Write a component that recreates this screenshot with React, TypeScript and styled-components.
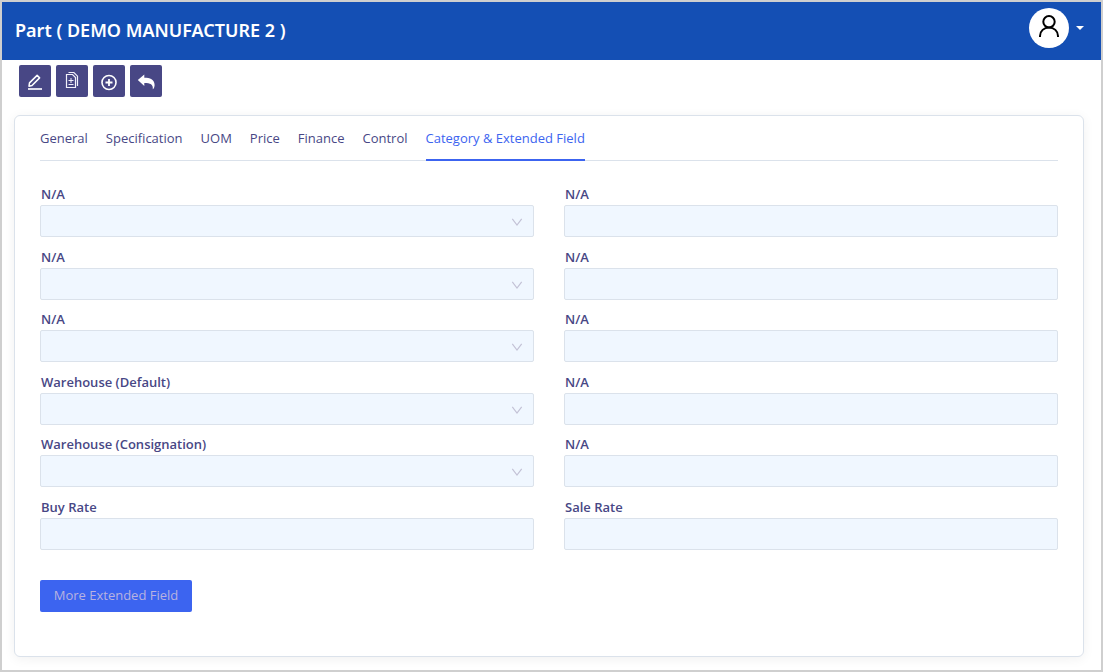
import React, { useId, useState } from "react";
import styled, { createGlobalStyle } from "styled-components";

const GlobalStyle = createGlobalStyle`
  *, *::before, *::after { box-sizing: border-box; }
  body {
    margin: 0;
    background: #ffffff;
    color: #484785;
    font-family: "Open Sans", "Noto Sans", sans-serif;
    font-size: 13px;
    line-height: 20px;
  }
  button, input, select { font: inherit; color: inherit; }
`;

const Page = styled.div`
  min-height: 100vh;
  border: 2px solid #cfcfcf;
  display: flex;
  flex-direction: column;
`;

const Header = styled.header`
  display: flex;
  align-items: center;
  justify-content: space-between;
  min-height: 58px;
  padding: 0 17px 6px 13px;
  background: #144fb4;
`;

const Title = styled.h1`
  margin: 0;
  padding-top: 4px;
  color: #ffffff;
  font-family: "Noto Sans", sans-serif;
  font-size: 18px;
  line-height: 28px;
  font-weight: 600;
`;

const UserMenu = styled.button`
  display: flex;
  align-items: center;
  gap: 7px;
  padding: 0;
  border: 0;
  background: none;
  cursor: pointer;
`;

const Avatar = styled.span`
  display: grid;
  place-items: center;
  width: 40px;
  height: 40px;
  border-radius: 50%;
  background: #ffffff;
`;

const Toolbar = styled.div`
  display: flex;
  gap: 5px;
  padding: 5px 17px;
`;

const ToolButton = styled.button`
  width: 32px;
  height: 32px;
  padding: 0;
  border: 0;
  border-radius: 2px;
  background: #484785;
  cursor: pointer;
  svg { display: block; }
`;

const Card = styled.main`
  flex: 1;
  margin: 13px 17px 13px 12px;
  padding: 0 25px 44px;
  border: 1px solid #dbe2eb;
  border-radius: 6px;
  background: #ffffff;
  box-shadow: 0 2px 12px rgba(0, 0, 0, 0.06);
`;

const TabList = styled.div`
  display: flex;
  gap: 18px;
  border-bottom: 1px solid #dbe2eb;
`;

const Tab = styled.button<{ $active: boolean }>`
  height: 45px;
  margin-bottom: -1px;
  padding: 1px 0 0;
  border: 0;
  border-bottom: 2px solid ${(p) => (p.$active ? "#3c64f0" : "transparent")};
  background: none;
  color: ${(p) => (p.$active ? "#3c64f0" : "#484785")};
  white-space: nowrap;
  cursor: pointer;
`;

const Form = styled.form`
  padding-top: 24px;
`;

const FieldGrid = styled.div`
  display: grid;
  grid-template-columns: 1fr 1fr;
  grid-auto-rows: 63px 62px;
  column-gap: 30px;
`;

const Field = styled.div`
  display: flex;
  flex-direction: column;
`;

const Label = styled.label`
  padding: 0 0 2px 1px;
  line-height: 18px;
  font-weight: 600;
`;

const Input = styled.input`
  width: 100%;
  height: 32px;
  padding: 0 11px;
  border: 1px solid #dbe2eb;
  border-radius: 2px;
  background: #f0f7ff;
`;

const SelectBox = styled.div`
  display: grid;
  align-items: center;
  > * { grid-area: 1 / 1; }
  > svg { justify-self: end; margin: 2px 11px 0 0; pointer-events: none; }
`;

const Select = styled(Input).attrs({ as: "select" })`
  appearance: none;
`;

const MoreButton = styled.button`
  min-width: 152px;
  height: 32px;
  margin-top: 20px;
  padding: 0 12px 2px;
  border: 0;
  border-radius: 2px;
  background: #3c64f0;
  color: #b8b2e0;
  cursor: pointer;
`;

const UserIcon = () => (
  <svg width="22" height="26" viewBox="0 0 22 26" fill="none" stroke="#000" strokeWidth="2" aria-hidden="true">
    <circle cx="11" cy="6.7" r="5.7" />
    <path d="M2 22v-1c0-5 4-8.5 9-8.5s9 3.500 9 8.500v1" />
  </svg>
);

const CaretIcon = () => (
  <svg width="8" height="4" viewBox="0 0 8 4" fill="#fff" aria-hidden="true">
    <path d="M0 0h8L4 4z" />
  </svg>
);

const EditIcon = () => (
  <svg width="32" height="32" viewBox="0 0 32 32" fill="none" stroke="#fff" strokeWidth="1.5" aria-hidden="true">
    <path d="M10 21.2l.5-3.3 7.6-7.5 2.5 2.5-7.6 7.6z" strokeLinejoin="round" />
    <path d="M9 24h14" stroke="#dcdbea" strokeWidth="2" />
  </svg>
);

const CopyIcon = () => (
  <svg width="32" height="32" viewBox="0 0 32 32" fill="none" stroke="#f2f1fa" strokeWidth="1" aria-hidden="true">
    <path d="M10.5 9.5h6l3 3v10h-9z" strokeWidth="1.2" />
    <path d="M12.5 7.5h5.4l3.6 3.7V21" strokeWidth="1.2" />
    <path d="M15 13v5M12.5 15.5h5M12.5 19.5h5" />
  </svg>
);

const AddIcon = () => (
  <svg width="32" height="32" viewBox="0 0 32 32" fill="none" stroke="#fff" aria-hidden="true">
    <circle cx="16" cy="17.5" r="7" strokeWidth="1.6" />
    <path d="M16 14v7M12.5 17.5h7" strokeWidth="1.8" />
  </svg>
);

const BackIcon = () => (
  <svg width="32" height="32" viewBox="0 0 32 32" fill="#fff" aria-hidden="true">
    <path d="M7.8 15.1l6.5-5.5v3.1c5.7 0 10.2 1.5 10.3 7.3 0 1.5-.5 3-1.4 4.1-.2.2-.5.1-.4-.2.5-4.5-2.3-5.900-8.500-6v3z" />
  </svg>
);

const ChevronIcon = () => (
  <svg width="12" height="8" viewBox="0 0 12 8" fill="none" stroke="#c3c2d6" strokeWidth="1.2" aria-hidden="true">
    <path d="M1.3.8L6 7l4.7-6.2" />
  </svg>
);

const tabs = ["General", "Specification", "UOM", "Price", "Finance", "Control", "Category & Extended Field"];

const tools = [
  { label: "Edit", Icon: EditIcon },
  { label: "Copy", Icon: CopyIcon },
  { label: "Add", Icon: AddIcon },
  { label: "Back", Icon: BackIcon },
];

const fields = [
  { label: "N/A", select: true },
  { label: "N/A" },
  { label: "N/A", select: true },
  { label: "N/A" },
  { label: "N/A", select: true },
  { label: "N/A" },
  { label: "Warehouse (Default)", select: true },
  { label: "N/A" },
  { label: "Warehouse (Consignation)", select: true },
  { label: "N/A" },
  { label: "Buy Rate" },
  { label: "Sale Rate" },
];

function FormField({ label, select }: { label: string; select?: boolean }) {
  const id = useId();
  return (
    <Field>
      <Label htmlFor={id}>{label}</Label>
      {select ? (
        <SelectBox>
          <Select id={id} />
          <ChevronIcon />
        </SelectBox>
      ) : (
        <Input id={id} type="text" />
      )}
    </Field>
  );
}

export default function App() {
  const [active, setActive] = useState(tabs.length - 1);
  return (
    <>
      <GlobalStyle />
      <Page>
        <Header>
          <Title>Part ( DEMO MANUFACTURE 2 )</Title>
          <UserMenu type="button" aria-label="User menu">
            <Avatar>
              <UserIcon />
            </Avatar>
            <CaretIcon />
          </UserMenu>
        </Header>
        <Toolbar>
          {tools.map(({ label, Icon }) => (
            <ToolButton key={label} type="button" aria-label={label}>
              <Icon />
            </ToolButton>
          ))}
        </Toolbar>
        <Card>
          <TabList role="tablist">
            {tabs.map((tab, i) => (
              <Tab
                key={tab}
                type="button"
                role="tab"
                aria-selected={i === active}
                $active={i === active}
                onClick={() => setActive(i)}
              >
                {tab}
              </Tab>
            ))}
          </TabList>
          <Form>
            <FieldGrid>
              {fields.map((field, i) => (
                <FormField key={i} {...field} />
              ))}
            </FieldGrid>
            <MoreButton type="button">More Extended Field</MoreButton>
          </Form>
        </Card>
      </Page>
    </>
  );
}
